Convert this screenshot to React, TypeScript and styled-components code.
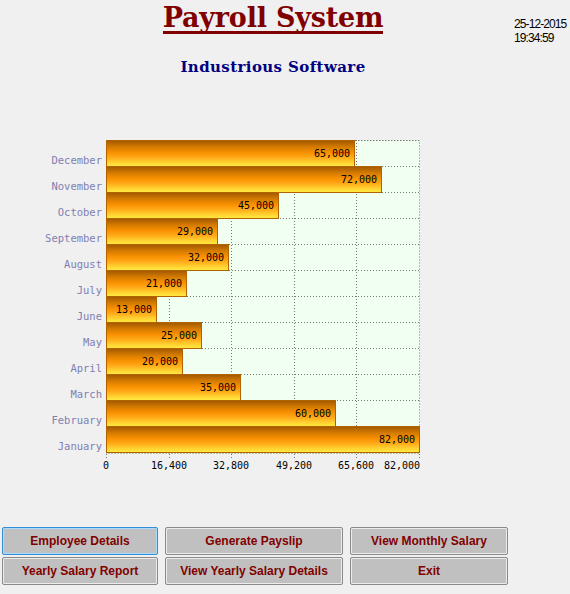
import React from 'react'
import styled, { createGlobalStyle } from 'styled-components'

const GlobalStyle = createGlobalStyle`
  html, body {
    margin: 0;
    padding: 0;
    background: #f0f0f0;
  }
`

const data = [
    { month: 'December', value: 65000 },
    { month: 'November', value: 72000 },
    { month: 'October', value: 45000 },
    { month: 'September', value: 29000 },
    { month: 'August', value: 32000 },
    { month: 'July', value: 21000 },
    { month: 'June', value: 13000 },
    { month: 'May', value: 25000 },
    { month: 'April', value: 20000 },
    { month: 'March', value: 35000 },
    { month: 'February', value: 60000 },
    { month: 'January', value: 82000 },
]

const MAX = 82000
const PLOT_W = 313
const ROW_H = 26
const ticks = [0, 16400, 32800, 49200, 65600, 82000]

const fmt = (n: number) => n.toLocaleString('en-US')

const App = () => {
    return (
        <Page>
            <GlobalStyle />
            <Header>
                <TitleBlock>
                    <Title>Payroll System</Title>
                    <SubTitle>Industrious Software</SubTitle>
                </TitleBlock>
                <Clock>
                    <div>25-12-2015</div>
                    <div>19:34:59</div>
                </Clock>
            </Header>

            <ChartSection>
                <YAxis>
                    {data.map((d) => (
                        <YLabel key={d.month}>{d.month}</YLabel>
                    ))}
                </YAxis>
                <div>
                    <Plot>
                        <GridSvg width={PLOT_W + 1} height={ROW_H * 12 + 2}>
                            {ticks.slice(1, 5).map((t) => {
                                const x = Math.round((t / MAX) * PLOT_W) + 0.5
                                return <line key={t} x1={x} y1={0} x2={x} y2={ROW_H * 12 + 2} stroke="#777" strokeDasharray="1 2" />
                            })}
                            {data.map((_, i) => {
                                const y = i * ROW_H + 0.5
                                return <line key={i} x1={0} y1={y} x2={PLOT_W + 1} y2={y} stroke="#777" strokeDasharray="1 2" />
                            })}
                            <rect x={0.5} y={0.5} width={PLOT_W} height={ROW_H * 12 + 1} fill="none" stroke="#777" strokeDasharray="1 2" />
                        </GridSvg>
                        <Bars>
                            {data.map((d) => (
                                <BarRow key={d.month}>
                                    <Bar style={{ width: Math.round((d.value / MAX) * PLOT_W) + 1 }}>
                                        {fmt(d.value)}
                                    </Bar>
                                </BarRow>
                            ))}
                        </Bars>
                    </Plot>
                    <Ticks>
                        {ticks.map((t) => (
                            <Tick key={t} style={{ left: Math.round((t / MAX) * PLOT_W) }} />
                        ))}
                    </Ticks>
                    <XAxis>
                        {ticks.map((t, i) => (
                            <XLabel key={t} last={i === ticks.length - 1} style={{ left: Math.round((t / MAX) * PLOT_W) }}>
                                {fmt(t)}
                            </XLabel>
                        ))}
                    </XAxis>
                </div>
            </ChartSection>

            <Buttons>
                <Button focused>Employee Details</Button>
                <Button>Generate Payslip</Button>
                <Button>View Monthly Salary</Button>
                <Button>Yearly Salary Report</Button>
                <Button>View Yearly Salary Details</Button>
                <Button>Exit</Button>
            </Buttons>
        </Page>
    )
}

const Page = styled.div`
    width: 570px;
    height: 594px;
    display: flex;
    flex-direction: column;
    background: #f0f0f0;
    overflow: hidden;
`

const Header = styled.div`
    display: grid;
    grid-template-columns: 514px 56px;
    height: 90px;
`

const TitleBlock = styled.div`
    padding-left: 32px;
    display: flex;
    flex-direction: column;
    align-items: center;
`

const Title = styled.div`
    margin-top: 4px;
    font-family: "DejaVu Serif", serif;
    font-weight: bold;
    font-size: 27px;
    line-height: 27px;
    color: #800000;
    border-bottom: 3px solid #800000;
    padding-bottom: 0px;
    letter-spacing: -0.2px;
    white-space: nowrap;
`

const SubTitle = styled.div`
    margin-top: 24px;
    font-family: "DejaVu Serif", serif;
    font-weight: bold;
    font-size: 15px;
    color: #000080;
    letter-spacing: 0.4px;
    white-space: nowrap;
`

const Clock = styled.div`
    padding-top: 17px;
    font-family: "Liberation Sans", Arial, sans-serif;
    font-size: 12px;
    line-height: 14px;
    letter-spacing: -0.9px;
    color: #000;
    white-space: nowrap;
`

const ChartSection = styled.div`
    margin-top: 50px;
    display: flex;
    align-items: flex-start;
`

const YAxis = styled.div`
    width: 102px;
    display: grid;
    grid-template-rows: repeat(12, ${ROW_H}px);
    margin-right: 4px;
    padding-top: 1px;
`

const YLabel = styled.div`
    display: flex;
    align-items: flex-end;
    justify-content: flex-end;
    font-family: "DejaVu Sans Mono", monospace;
    font-size: 10.5px;
    line-height: 13px;
    color: #7f7fb0;
`

const Plot = styled.div`
    position: relative;
    width: ${PLOT_W + 1}px;
    height: ${ROW_H * 12 + 2}px;
    background: #f0fff0;
`

const GridSvg = styled.svg`
    position: absolute;
    left: 0;
    top: 0;
`

const Bars = styled.div`
    position: relative;
    display: flex;
    flex-direction: column;
`

const BarRow = styled.div`
    height: ${ROW_H}px;
    display: flex;
`

const Bar = styled.div`
    box-sizing: border-box;
    height: ${ROW_H + 1}px;
    border: 1px solid #b06400;
    background: linear-gradient(to bottom, #a65a00 0%, #d07800 22%, #f89000 45%, #ffa818 65%, #ffd030 85%, #ffe840 100%);
    display: flex;
    align-items: center;
    justify-content: flex-end;
    padding-right: 4px;
    font-family: "DejaVu Sans Mono", monospace;
    font-size: 10px;
    color: #000;
`

const Ticks = styled.div`
    position: relative;
    height: 4px;
`

const Tick = styled.div`
    position: absolute;
    top: 0;
    width: 1px;
    height: 4px;
    background: repeating-linear-gradient(to bottom, #777 0 1px, transparent 1px 3px);
`

const XAxis = styled.div`
    position: relative;
    height: 16px;
    width: ${PLOT_W + 1}px;
`

const XLabel = styled.div<{ last?: boolean }>`
    position: absolute;
    top: 2px;
    transform: ${(p) => (p.last ? 'translateX(-100%)' : 'translateX(-50%)')};
    margin-left: ${(p) => (p.last ? '1px' : '0')};
    font-family: "DejaVu Sans Mono", monospace;
    font-size: 10px;
    color: #000;
    white-space: nowrap;
`

const Buttons = styled.div`
    margin-top: 53px;
    margin-left: 2px;
    display: grid;
    grid-template-columns: 156px 178px 158px;
    grid-auto-rows: 28px;
    column-gap: 7px;
    row-gap: 2px;
`

const Button = styled.button<{ focused?: boolean }>`
    box-sizing: border-box;
    margin: 0;
    padding: 0;
    border-radius: 2px;
    border: 1px solid ${(p) => (p.focused ? '#2f8fd8' : '#8a8a8a')};
    box-shadow: inset 0 0 0 1px ${(p) => (p.focused ? '#a8dcf8' : '#ececec')};
    background: #c0c0c0;
    color: #800000;
    font-family: "Liberation Sans", Arial, sans-serif;
    font-weight: bold;
    font-size: 12px;
`

export default App
